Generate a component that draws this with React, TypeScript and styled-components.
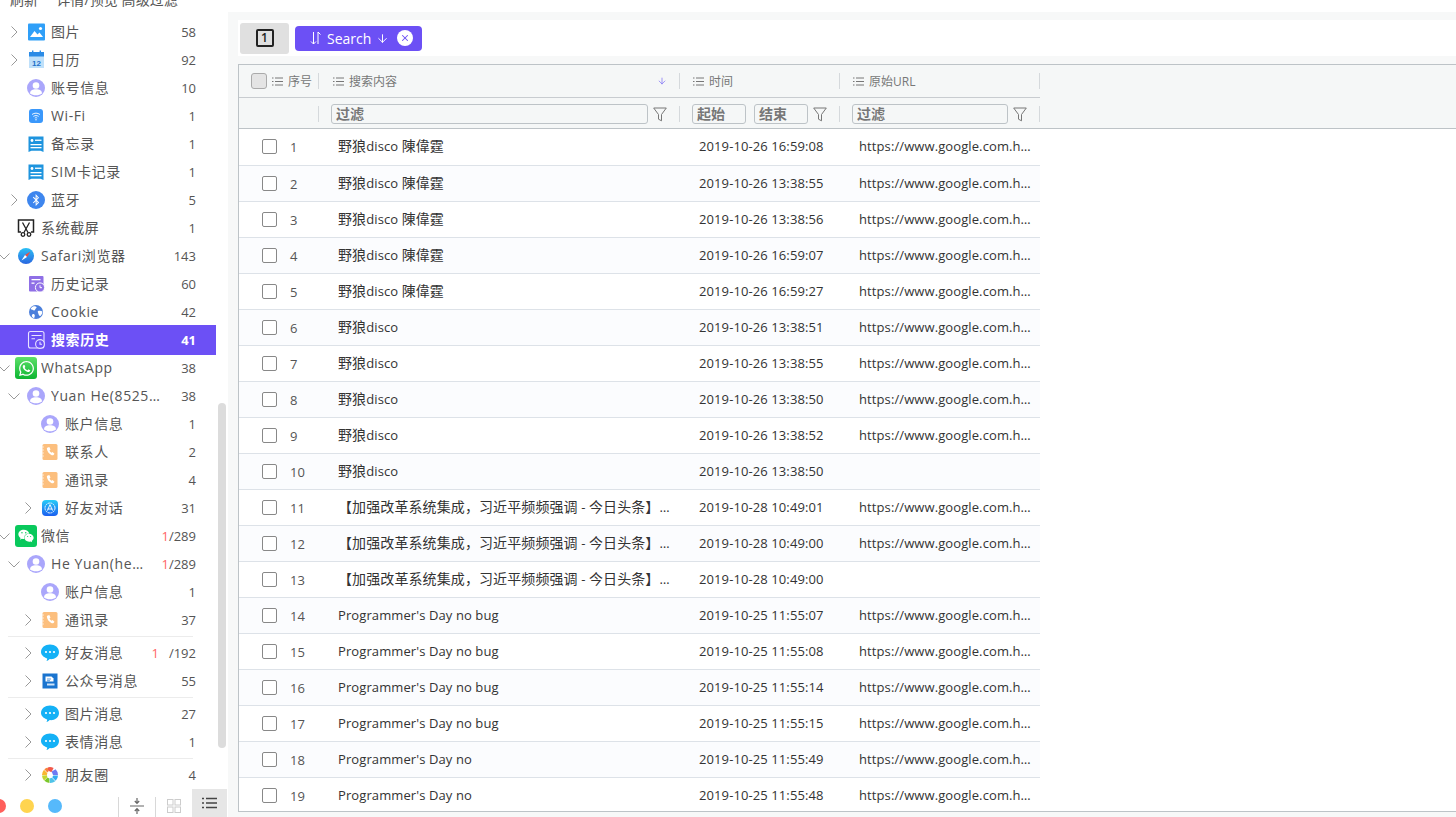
import React from 'react'
import styled, { createGlobalStyle } from 'styled-components'
import { FaWhatsapp, FaWeixin, FaBluetoothB } from 'react-icons/fa'
import { ArrowDown, X } from 'lucide-react'

type IconKind =
  | 'photo'
  | 'calendar'
  | 'avatar'
  | 'wifi'
  | 'memo'
  | 'bluetooth'
  | 'screenshot'
  | 'safari'
  | 'history'
  | 'historyActive'
  | 'globe'
  | 'whatsapp'
  | 'wechat'
  | 'contact'
  | 'appstore'
  | 'bubble'
  | 'article'
  | 'moments'

type TreeRow = {
  label: string
  icon: IconKind
  indent: number
  count: string
  unread?: string
  unreadGap?: boolean
  chevron?: 'right' | 'down'
  active?: boolean
  ruleBefore?: boolean
}

const treeRows: TreeRow[] = [
  { label: '图片', icon: 'photo', indent: 10, count: '58', chevron: 'right' },
  { label: '日历', icon: 'calendar', indent: 10, count: '92', chevron: 'right' },
  { label: '账号信息', icon: 'avatar', indent: 10, count: '10' },
  { label: 'Wi-Fi', icon: 'wifi', indent: 10, count: '1' },
  { label: '备忘录', icon: 'memo', indent: 10, count: '1' },
  { label: 'SIM卡记录', icon: 'memo', indent: 10, count: '1' },
  { label: '蓝牙', icon: 'bluetooth', indent: 10, count: '5', chevron: 'right' },
  { label: '系统截屏', icon: 'screenshot', indent: 0, count: '1' },
  { label: 'Safari浏览器', icon: 'safari', indent: 0, count: '143', chevron: 'down' },
  { label: '历史记录', icon: 'history', indent: 10, count: '60' },
  { label: 'Cookie', icon: 'globe', indent: 10, count: '42' },
  { label: '搜索历史', icon: 'historyActive', indent: 10, count: '41', active: true },
  { label: 'WhatsApp', icon: 'whatsapp', indent: 0, count: '38', chevron: 'down' },
  { label: 'Yuan He(85251234567)', icon: 'avatar', indent: 10, count: '38', chevron: 'down' },
  { label: '账户信息', icon: 'avatar', indent: 24, count: '1' },
  { label: '联系人', icon: 'contact', indent: 24, count: '2' },
  { label: '通讯录', icon: 'contact', indent: 24, count: '4' },
  { label: '好友对话', icon: 'appstore', indent: 24, count: '31', chevron: 'right' },
  { label: '微信', icon: 'wechat', indent: 0, count: '/289', unread: '1', chevron: 'down' },
  { label: 'He Yuan(heyuan110)', icon: 'avatar', indent: 10, count: '/289', unread: '1', chevron: 'down' },
  { label: '账户信息', icon: 'avatar', indent: 24, count: '1' },
  { label: '通讯录', icon: 'contact', indent: 24, count: '37', chevron: 'right' },
  { label: '好友消息', icon: 'bubble', indent: 24, count: '/192', unread: '1', unreadGap: true, chevron: 'right', ruleBefore: true },
  { label: '公众号消息', icon: 'article', indent: 24, count: '55', chevron: 'right' },
  { label: '图片消息', icon: 'bubble', indent: 24, count: '27', chevron: 'right', ruleBefore: true },
  { label: '表情消息', icon: 'bubble', indent: 24, count: '1', chevron: 'right' },
  { label: '朋友圈', icon: 'moments', indent: 24, count: '4', chevron: 'right', ruleBefore: true },
]

const URL_TEXT = 'https://www.google.com.hk/search?q=disco'
const LONG_TITLE = '【加强改革系统集成，习近平频频强调 - 今日头条】https://www.toutiao.com/a6752'

const tableRows: [string, string, string][] = [
  ['野狼disco 陳偉霆', '2019-10-26 16:59:08', URL_TEXT],
  ['野狼disco 陳偉霆', '2019-10-26 13:38:55', URL_TEXT],
  ['野狼disco 陳偉霆', '2019-10-26 13:38:56', URL_TEXT],
  ['野狼disco 陳偉霆', '2019-10-26 16:59:07', URL_TEXT],
  ['野狼disco 陳偉霆', '2019-10-26 16:59:27', URL_TEXT],
  ['野狼disco', '2019-10-26 13:38:51', URL_TEXT],
  ['野狼disco', '2019-10-26 13:38:55', URL_TEXT],
  ['野狼disco', '2019-10-26 13:38:50', URL_TEXT],
  ['野狼disco', '2019-10-26 13:38:52', URL_TEXT],
  ['野狼disco', '2019-10-26 13:38:50', ''],
  [LONG_TITLE, '2019-10-28 10:49:01', URL_TEXT],
  [LONG_TITLE, '2019-10-28 10:49:00', URL_TEXT],
  [LONG_TITLE, '2019-10-28 10:49:00', ''],
  ["Programmer's Day no bug", '2019-10-25 11:55:07', URL_TEXT],
  ["Programmer's Day no bug", '2019-10-25 11:55:08', URL_TEXT],
  ["Programmer's Day no bug", '2019-10-25 11:55:14', URL_TEXT],
  ["Programmer's Day no bug", '2019-10-25 11:55:15', URL_TEXT],
  ["Programmer's Day no", '2019-10-25 11:55:49', URL_TEXT],
  ["Programmer's Day no", '2019-10-25 11:55:48', URL_TEXT],
]

// the CJK runs sit a little larger than the latin ones in the cells
function mixedText(text: string) {
  return text.split(/([\u3000-\u9fff\uff00-\uffef]+)/).map((part, i) => (i % 2 === 1 ? <Han key={i}>{part}</Han> : part))
}

function TreeIcon({ kind }: { kind: IconKind }) {
  switch (kind) {
    case 'photo':
      return (
        <svg width="22" height="22" viewBox="0 0 22 22">
          <rect x="3" y="2.5" width="17" height="17" rx="1" fill="#2f9ff8" />
          <path d="M5 16l4.5-6 3 3.5 2-2 3.5 4.5z" fill="#fff" />
          <circle cx="15.5" cy="7.5" r="1.6" fill="#fff" />
        </svg>
      )
    case 'calendar':
      return (
        <svg width="22" height="22" viewBox="0 0 22 22">
          <rect x="4" y="3" width="15" height="16" fill="#bfe0fa" />
          <rect x="4" y="3" width="15" height="4.5" fill="#2b8be6" />
          <rect x="7" y="1.5" width="1.4" height="3" fill="#2b8be6" />
          <rect x="14.6" y="1.5" width="1.4" height="3" fill="#2b8be6" />
          <text x="11.5" y="17" textAnchor="middle" fontSize="8" fontWeight="700" fontFamily="Liberation Sans, sans-serif" fill="#2370c9">12</text>
        </svg>
      )
    case 'avatar':
      return (
        <svg width="22" height="22" viewBox="0 0 22 22">
          <circle cx="11" cy="11" r="9" fill="#aaa6fb" />
          <circle cx="11" cy="8.5" r="3.3" fill="#fff" />
          <path d="M5 16.5c0-3 2.6-4.2 6-4.2s6 1.2 6 4.2c-1.6 1.2-3.6 1.8-6 1.8s-4.4-.6-6-1.8z" fill="#fff" />
        </svg>
      )
    case 'wifi':
      return (
        <svg width="22" height="22" viewBox="0 0 22 22" fill="none" stroke="#fff" strokeWidth=".9">
          <rect x="4" y="4" width="14" height="14" rx="3" fill="#3a98fb" stroke="none" />
          <path d="M7 9.5c2.4-1.8 5.6-1.8 8 0M8.4 11.4c1.6-1.1 3.6-1.1 5.2 0M9.8 13.1c.7-.5 1.7-.5 2.4 0" />
          <circle cx="11" cy="14.8" r=".7" fill="#fff" stroke="none" />
        </svg>
      )
    case 'memo':
      return (
        <svg width="22" height="22" viewBox="0 0 22 22">
          <path d="M3.5 3.5h15v15.5l-3-1.200h-9l-3 1.200z" fill="#1e94de" />
          <circle cx="7" cy="7.500" r="1.400" fill="#fff" />
          <rect x="10" y="6.600" width="6.500" height="1.300" fill="#fff" />
          <rect x="5.500" y="11" width="11" height="1.300" fill="#fff" />
          <rect x="5.500" y="14" width="11" height="1.300" fill="#fff" />
        </svg>
      )
    case 'bluetooth':
      return (
        <IconDisc $size={18} $bg="#3e86ee">
          <FaBluetoothB size={12} color="#fff" />
        </IconDisc>
      )
    case 'screenshot':
      return (
        <svg width="22" height="22" viewBox="0 0 22 22" fill="none" stroke="#222" strokeWidth="1.5">
          <path d="M6 15H3.5V3h15v12H16" />
          <path d="M7.500 5.500l5.500 10M14.500 5.500l-5.500 10" strokeWidth="1.300" />
          <circle cx="8" cy="17.500" r="1.800" strokeWidth="1.300" />
          <circle cx="14" cy="17.500" r="1.800" strokeWidth="1.300" />
        </svg>
      )
    case 'safari':
      return (
        <svg width="22" height="22" viewBox="0 0 22 22">
          <defs>
            <linearGradient id="safariFill" x1="0" y1="0" x2="0" y2="1">
              <stop offset="0" stopColor="#2bc0f5" />
              <stop offset="1" stopColor="#2a66e0" />
            </linearGradient>
          </defs>
          <circle cx="11" cy="11" r="8" fill="url(#safariFill)" />
          <path d="M15.500 6.500L12 12l-2-2z" fill="#f04e40" />
          <path d="M6.500 15.500L10 10l2 2z" fill="#fff" />
        </svg>
      )
    case 'history':
      return (
        <svg width="22" height="22" viewBox="0 0 22 22">
          <rect x="4" y="3" width="14.500" height="15.500" rx="1" fill="#8f6fe6" />
          <rect x="6.500" y="6" width="9" height="1.300" fill="#fff" />
          <rect x="6.500" y="9.500" width="3" height="1.300" fill="#fff" />
          <circle cx="15" cy="14.500" r="4.600" fill="#8f6fe6" stroke="#fff" strokeWidth="1" />
          <path d="M15 12.300v2.400h2" fill="none" stroke="#fff" strokeWidth="1" />
        </svg>
      )
    case 'historyActive':
      return (
        <svg width="22" height="22" viewBox="0 0 22 22" fill="none" stroke="#e9e4ff" strokeWidth="1.100">
          <rect x="3.500" y="2.500" width="15.500" height="16.500" rx="2" />
          <path d="M6.500 6.500h10M6.500 9.800h3.500" />
          <circle cx="15" cy="15" r="4.400" fill="#6c50f5" />
          <path d="M15 12.800v2.400h2" />
        </svg>
      )
    case 'globe':
      return (
        <svg width="22" height="22" viewBox="0 0 22 22">
          <circle cx="11" cy="11" r="7" fill="#4b7fdb" />
          <path d="M8 5.500c1.500-.5 3-.4 3.500.6.4 1-1 1.300-1.300 2.400-.3 1.200-1.600 1-2.500.5-.8-.5-1.600-.4-2-.9.3-1 1-2 2.300-2.600zM13 10c1.400-.6 3.400-.5 4.400.5 0 1.600-.7 3.400-2 4.600-1 .1-1.700-.8-1.900-2-.2-1.100-1.200-2.400-.5-3.100zM8 13c.8-.2 1.800.4 1.800 1.400 0 1-.3 2-.8 2.800-1-.4-1.800-1.200-2.200-2.200.1-.9.5-1.800 1.200-2z" fill="#fff" />
        </svg>
      )
    case 'whatsapp':
      return (
        <IconTile $size={22} $bg="linear-gradient(#5ee06a, #0cb531)">
          <FaWhatsapp size={17} color="#fff" />
        </IconTile>
      )
    case 'wechat':
      return (
        <IconTile $size={22} $bg="#09c95c">
          <FaWeixin size={16} color="#fff" />
        </IconTile>
      )
    case 'contact':
      return (
        <svg width="22" height="22" viewBox="0 0 22 22">
          <rect x="3.500" y="3" width="15" height="16" rx="1.500" fill="#fcbf7e" />
          <path d="M3.500 6h1.300M3.500 9h1.300M3.500 12h1.300M3.500 15h1.300" stroke="#fff" strokeWidth=".8" />
          <path d="M8.800 6.600l1.500-.6 1.200 2.600-1 .8c.4 1 1 1.700 2 2.300l1-.8 2 1.800-1 1.200c-.5.5-1.400.5-2.200.1-2.500-1.300-4-3.400-4.400-5.900-.1-.7.2-1.300.9-1.500z" fill="#fff" />
        </svg>
      )
    case 'appstore':
      return (
        <IconTile $size={16} $bg="linear-gradient(#28cdf8, #1a5ef0)" $radius={4}>
          <svg width="14" height="14" viewBox="0 0 14 14" fill="none" stroke="#fff" strokeWidth=".9">
            <circle cx="7" cy="7" r="5" strokeDasharray="2 .6" />
            <path d="M7 3.600L4.400 9.600M7 3.600l2.600 6M4.600 8h4.800" />
          </svg>
        </IconTile>
      )
    case 'bubble':
      return (
        <svg width="22" height="22" viewBox="0 0 22 22">
          <path d="M11 2.500c5 0 9 3 9 7.500s-4 7.200-8 7.200c-.5 0-1 0-1.400-.1-.7 1-1.900 1.800-3.200 2 .5-.8.8-1.600.8-2.700C4.600 15.200 2 13 2 10c0-4.500 4-7.500 9-7.500z" fill="#14b1f6" />
          <circle cx="7" cy="10" r="1.100" fill="#fff" />
          <circle cx="11" cy="10" r="1.100" fill="#fff" />
          <circle cx="15" cy="10" r="1.100" fill="#fff" />
        </svg>
      )
    case 'article':
      return (
        <svg width="22" height="22" viewBox="0 0 22 22">
          <rect x="3.500" y="3.500" width="15" height="15" fill="#1a74cf" />
          <path d="M6.500 6.500h6l2 2v3h-8z" fill="#fff" />
          <path d="M8 13.500h7.500v2H8z" fill="#cfe4f8" />
          <path d="M8 9h4M8 10.700h3" stroke="#1a74cf" strokeWidth=".7" />
        </svg>
      )
    case 'moments':
      return (
        <svg width="22" height="22" viewBox="0 0 22 22">
          <path d="M11 3a8 8 0 0 1 5 1.800L13 8.500 8.600 5z" fill="#f2594b" transform="rotate(-12 11 11)" />
          <path d="M16.600 5.200A8 8 0 0 1 19 11h-5l-1.300-3.500z" fill="#6e79f2" />
          <path d="M19 11.500a8 8 0 0 1-2.300 5.300l-3.400-3.500 1-1.800z" fill="#33aaf0" />
          <path d="M16.300 17.200A8 8 0 0 1 11 19l-.6-4.500 2.600-.7z" fill="#4fc3e8" />
          <path d="M10.500 19a8 8 0 0 1-5.200-2.200l3.200-3.200 1.700 1z" fill="#7cc72a" />
          <path d="M5 16.500A8 8 0 0 1 3 11.500l5-.2.300 2z" fill="#c5d52d" />
          <path d="M3 11a8 8 0 0 1 2-5.300l3.400 3.600-.6 1.700z" fill="#f9b62f" />
          <path d="M5.300 5.300A8 8 0 0 1 8.500 3.400l1 4-1.200 1.200z" fill="#f8833a" />
        </svg>
      )
  }
}

function ListGlyph() {
  return (
    <svg width="11" height="9" viewBox="0 0 11 9" fill="none" stroke="#777" strokeWidth="1">
      <path d="M0 1h1.500M3 1h8M0 4.500h1.500M3 4.500h8M0 8h1.500M3 8h8" />
    </svg>
  )
}

function FunnelGlyph() {
  return (
    <FunnelSvg width="14" height="15" viewBox="0 0 14 15" fill="none" stroke="#777" strokeWidth="1">
      <path d="M.7 1h12.600L8.500 7.500v6.300L5.500 12.200V7.500z" strokeLinejoin="round" />
    </FunnelSvg>
  )
}

function Chevron({ dir }: { dir: 'right' | 'down' }) {
  if (dir === 'right') {
    return (
      <svg width="10" height="12" viewBox="0 0 10 12" fill="none" stroke="#999" strokeWidth="1">
        <path d="M1.500 .5L7 6 1.500 11.500" />
      </svg>
    )
  }
  return (
    <ChevronDownSvg width="12" height="12" viewBox="0 0 12 12" fill="none" stroke="#999" strokeWidth="1">
      <path d="M.5 3.500L6 9l5.500-5.500" />
    </ChevronDownSvg>
  )
}

function App() {
  return (
    <>
      <GlobalStyle />
      <Page>
        <Sidebar>
          <TreeColumn>
            <TopLabels>
              <span>刷新</span>
              <span>详情/预览 高级过滤</span>
            </TopLabels>
            <TreeList>
              {treeRows.map((row, i) => (
                <React.Fragment key={i}>
                  {row.ruleBefore && <TreeRule />}
                  <Row $indent={row.indent} $active={row.active}>
                    <ChevronSlot>{row.chevron && <Chevron dir={row.chevron} />}</ChevronSlot>
                    <IconSlot>
                      <TreeIcon kind={row.icon} />
                    </IconSlot>
                    <RowLabel>{row.label}</RowLabel>
                    <RowCount>
                      {row.unread && <Unread $gap={row.unreadGap}>{row.unread}</Unread>}
                      {row.count}
                    </RowCount>
                  </Row>
                </React.Fragment>
              ))}
            </TreeList>
          </TreeColumn>
          <ScrollTrack>
            <ScrollThumb />
          </ScrollTrack>
          <BottomBar>
            <Dot $color="#ff5f5b" />
            <Dot $color="#ffd44f" />
            <Dot $color="#56b9fb" />
            <BarDivider $left={42} />
            <BarIcon>
              <svg width="16" height="18" viewBox="0 0 16 18" fill="none" stroke="#666" strokeWidth="1.200">
                <path d="M1 9h14M8 1v5M5.800 4L8 6.400 10.200 4M8 17v-5M5.800 14L8 11.600 10.200 14" />
              </svg>
            </BarIcon>
            <BarDivider />
            <BarIcon>
              <svg width="14" height="14" viewBox="0 0 14 14" fill="none" stroke="#ccc" strokeWidth="1">
                <rect x=".5" y=".5" width="5.500" height="5.500" />
                <rect x="8" y=".5" width="5.500" height="5.500" />
                <rect x=".5" y="8" width="5.500" height="5.500" />
                <rect x="8" y="8" width="5.500" height="5.500" />
              </svg>
            </BarIcon>
            <ListToggle>
              <svg width="15" height="12" viewBox="0 0 15 12" fill="none" stroke="#444" strokeWidth="1.300">
                <path d="M0 1.500h2M4 1.500h11M0 6h2M4 6h11M0 10.500h2M4 10.500h11" />
              </svg>
            </ListToggle>
          </BottomBar>
        </Sidebar>
        <Main>
          <Toolbar>
            <CounterButton>
              <CounterBox>1</CounterBox>
            </CounterButton>
            <SortChip>
              <svg width="14" height="14" viewBox="0 0 14 14" fill="none" stroke="#fff" strokeWidth="1">
                <path d="M4.500 1v12M2 10.500L4.500 13 7 10.500M9 13V1M9 1l2.500 2.500" />
              </svg>
              <span>Search</span>
              <ArrowDown size={13} strokeWidth={1.800} />
              <ChipClose>
                <X size={10} strokeWidth={2.500} color="#6c50f5" />
              </ChipClose>
            </SortChip>
          </Toolbar>
          <Table>
            <HeaderBand>
              <HeaderRow>
                <HeadCell $pad={12}>
                  <HeadCheck />
                  <ListGlyph />
                  <span>序号</span>
                </HeadCell>
                <HeadCell $pad={14}>
                  <ListGlyph />
                  <span>搜索内容</span>
                  <SortMark>
                    <ArrowDown size={10} strokeWidth={1.500} color="#6c5cf5" />
                  </SortMark>
                </HeadCell>
                <HeadCell $pad={13}>
                  <ListGlyph />
                  <span>时间</span>
                </HeadCell>
                <HeadCell $pad={13}>
                  <ListGlyph />
                  <span>原始URL</span>
                </HeadCell>
              </HeaderRow>
              <FilterRow>
                <FilterCell $pad={12} />
                <FilterCell $pad={12}>
                  <FilterInput $grow>过滤</FilterInput>
                  <FunnelGlyph />
                </FilterCell>
                <FilterCell $pad={12}>
                  <FilterInput>起始</FilterInput>
                  <FilterInput>结束</FilterInput>
                  <FunnelGlyph />
                </FilterCell>
                <FilterCell $pad={12}>
                  <FilterInput $grow>过滤</FilterInput>
                  <FunnelGlyph />
                </FilterCell>
              </FilterRow>
            </HeaderBand>
            <TableBody>
              {tableRows.map((row, i) => (
                <DataRow key={i} $striped={i % 2 === 1}>
                  <IndexCell>
                    <RowCheck />
                    <span>{i + 1}</span>
                  </IndexCell>
                  <TextCell>{mixedText(row[0])}</TextCell>
                  <TextCell>{row[1]}</TextCell>
                  <TextCell>{row[2]}</TextCell>
                </DataRow>
              ))}
            </TableBody>
          </Table>
        </Main>
      </Page>
    </>
  )
}

export default App

const COLUMNS = '80px 361px 160px 200px'

const GlobalStyle = createGlobalStyle`
  html, body {
    margin: 0;
    height: 100%;
    overflow: hidden;
    background: #fff;
  }
  body {
    font-family: "Open Sans", "Noto Sans CJK SC", sans-serif;
    color: #444;
  }
`
const Page = styled.div`
  display: flex;
  width: 1456px;
  height: 817px;
  overflow: hidden;
`
const Sidebar = styled.aside`
  width: 228px;
  flex: none;
  display: grid;
  grid-template-columns: 216px 12px;
  grid-template-rows: 1fr 28px;
  height: 817px;
  overflow: hidden;
`
const TreeColumn = styled.div`
  min-height: 0;
  overflow: hidden;
`
const TopLabels = styled.div`
  height: 18px;
  overflow: hidden;
  display: flex;
  gap: 18px;
  padding-left: 10px;
  font-size: 14px;
  letter-spacing: 0.1px;
  line-height: 14px;
  color: #555;
  span {
    margin-top: -7px;
    height: 14px;
  }
`
const TreeList = styled.div`
  display: flex;
  flex-direction: column;
`
const Row = styled.div<{ $indent: number; $active?: boolean }>`
  display: flex;
  align-items: center;
  flex: none;
  height: ${(p) => (p.$active ? 30 : 28)}px;
  margin: ${(p) => (p.$active ? '-1px 0' : 0)};
  padding: 0 20px 0 ${(p) => p.$indent}px;
  background: ${(p) => (p.$active ? '#6c50f5' : 'transparent')};
  color: ${(p) => (p.$active ? '#fff' : '#555')};
  font-weight: ${(p) => (p.$active ? 700 : 400)};
`
const ChevronSlot = styled.span`
  width: 15px;
  flex: none;
  display: flex;
  align-items: center;
`
const ChevronDownSvg = styled.svg`
  flex: none;
  margin-left: -2px;
`
const IconSlot = styled.span`
  width: 22px;
  height: 22px;
  flex: none;
  display: flex;
  align-items: center;
  justify-content: center;
  margin-right: 4px;
`
const IconTile = styled.span<{ $size: number; $bg: string; $radius?: number }>`
  width: ${(p) => p.$size}px;
  height: ${(p) => p.$size}px;
  border-radius: ${(p) => p.$radius ?? 3}px;
  background: ${(p) => p.$bg};
  display: flex;
  align-items: center;
  justify-content: center;
`
const IconDisc = styled(IconTile)`
  border-radius: 50%;
`
const RowLabel = styled.span`
  flex: 1;
  min-width: 0;
  font-size: 14px;
  letter-spacing: 0.6px;
  line-height: 20px;
  white-space: nowrap;
  overflow: hidden;
  text-overflow: ellipsis;
`
const RowCount = styled.span`
  flex: none;
  margin-left: 14px;
  font-size: 13px;
  white-space: nowrap;
`
const Unread = styled.span<{ $gap?: boolean }>`
  color: #f66;
  margin-right: ${(p) => (p.$gap ? 10 : 0)}px;
`
const TreeRule = styled.div`
  flex: none;
  height: 1px;
  margin: 2px 23px 2px 8px;
  background: #ececec;
`
const ScrollTrack = styled.div`
  padding: 403px 2px 0;
  min-height: 0;
  overflow: hidden;
`
const ScrollThumb = styled.div`
  height: 345px;
  width: 8px;
  border-radius: 4px;
  background: #dcdcdc;
`
const BottomBar = styled.div`
  grid-column: 1 / span 2;
  display: flex;
  align-items: center;
  height: 28px;
  margin-left: -8px;
`
const Dot = styled.span<{ $color: string }>`
  flex: none;
  width: 14px;
  height: 14px;
  margin-top: 6px;
  margin-right: 14px;
  border-radius: 50%;
  background: ${(p) => p.$color};
`
const BarDivider = styled.span<{ $left?: number }>`
  flex: none;
  width: 1px;
  height: 20px;
  margin-top: 8px;
  margin-left: ${(p) => p.$left ?? 0}px;
  background: #d8d8d8;
`
const BarIcon = styled.span`
  flex: none;
  width: 36px;
  display: flex;
  justify-content: center;
  margin-top: 6px;
`
const ListToggle = styled.span`
  flex: none;
  width: 35px;
  height: 28px;
  display: flex;
  align-items: center;
  justify-content: center;
  background: #e6e6e6;
`
const Main = styled.main`
  flex: 1;
  min-width: 0;
  height: 805px;
  margin-top: 12px;
  padding: 8px 0 5px 10px;
  box-sizing: border-box;
  display: flex;
  flex-direction: column;
  background: #f7f8f8;
`
const Toolbar = styled.div`
  flex: none;
  height: 36px;
  display: flex;
  align-items: center;
  gap: 6px;
  padding-left: 2px;
  background: #fff;
`
const CounterButton = styled.div`
  width: 49px;
  height: 31px;
  border-radius: 3px;
  background: #e0e0e0;
  display: flex;
  align-items: center;
  justify-content: center;
`
const CounterBox = styled.span`
  box-sizing: border-box;
  width: 18px;
  height: 18px;
  border: 2px solid #222;
  border-radius: 2px;
  font-size: 12px;
  font-weight: 600;
  line-height: 14px;
  text-align: center;
  color: #222;
`
const SortChip = styled.div`
  height: 25px;
  width: 127px;
  box-sizing: border-box;
  padding: 0 9px 0 14px;
  border-radius: 4px;
  background: #6c50f5;
  color: #fff;
  display: flex;
  align-items: center;
  font-size: 14px;
  span {
    margin: 0 5px 0 4px;
  }
`
const ChipClose = styled.b`
  margin-left: auto;
  width: 16px;
  height: 16px;
  border-radius: 50%;
  background: #fff;
  display: flex;
  align-items: center;
  justify-content: center;
`
const Table = styled.section`
  flex: 1;
  min-height: 0;
  margin-top: 8px;
  overflow: hidden;
  background: #fff;
  border: 1px solid #bdc3c7;
  border-right: 0;
  color: #777;
`
const HeaderBand = styled.div`
  background: #f5f7f7;
  border-bottom: 1px solid #bdc3c7;
`
const HeaderRow = styled.div`
  display: grid;
  grid-template-columns: ${COLUMNS};
  height: 32px;
  width: 801px;
  border-bottom: 1px solid #c8ccd0;
`
const FilterRow = styled.div`
  display: grid;
  grid-template-columns: ${COLUMNS};
  height: 30px;
  width: 801px;
`
const HeadCell = styled.div<{ $pad: number }>`
  display: flex;
  align-items: center;
  gap: 5px;
  padding-left: ${(p) => p.$pad}px;
  font-size: 12px;
  color: #777;
  min-width: 0;
  &::after {
    content: '';
    flex: none;
    width: 1px;
    height: 16px;
    margin-left: auto;
    background: #d5d9dc;
  }
`
const HeadCheck = styled.span`
  flex: none;
  width: 14px;
  height: 14px;
  border: 1px solid #aaa;
  border-radius: 3px;
  background: #e4e4e4;
`
const SortMark = styled.span`
  flex: 1;
  display: flex;
  justify-content: flex-end;
  margin-right: 7px;
`
const FilterCell = styled(HeadCell)`
  padding-top: 2px;
`
const FunnelSvg = styled.svg`
  flex: none;
  margin-right: 7px;
`
const FilterInput = styled.div<{ $grow?: boolean }>`
  flex: ${(p) => (p.$grow ? 1 : 'none')};
  box-sizing: border-box;
  width: ${(p) => (p.$grow ? 'auto' : '54px')};
  height: 20px;
  padding-left: 4px;
  border: 1px solid #bdc3c7;
  border-radius: 3px;
  font-size: 14px;
  font-weight: 600;
  line-height: 18px;
  color: #777;
  & + & {
    margin-left: 3px;
  }
`
const TableBody = styled.div``
const DataRow = styled.div<{ $striped: boolean }>`
  display: grid;
  grid-template-columns: ${COLUMNS};
  width: 801px;
  height: 36px;
  box-sizing: border-box;
  align-items: center;
  border-bottom: 1px solid #dde2e8;
  background: ${(p) => (p.$striped ? '#fbfcfe' : '#fff')};
  color: #333;
  font-size: 13px;
  &:first-child {
    height: 37px;
    padding-bottom: 1px;
  }
`
const IndexCell = styled.div`
  display: flex;
  align-items: center;
  padding-left: 23px;
  gap: 13px;
  color: #555;
  font-size: 13px;
`
const RowCheck = styled.span`
  flex: none;
  width: 13px;
  height: 13px;
  border: 1px solid #888;
  border-radius: 2px;
  background: #fff;
`
const TextCell = styled.div`
  padding: 0 8px 2px 19px;
  min-width: 0;
  line-height: 20px;
  letter-spacing: 0.1px;
  white-space: nowrap;
  overflow: hidden;
  text-overflow: ellipsis;
`
const Han = styled.span`
  font-size: 14px;
`
